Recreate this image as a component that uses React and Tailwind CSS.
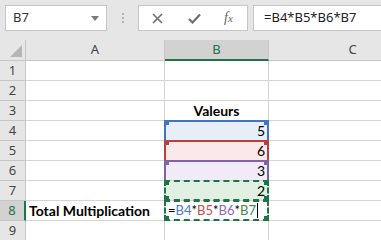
import React from 'react';

const rows = [1, 2, 3, 4, 5, 6, 7, 8, 9];

// colored reference ranges in column B
const ranges = {
  4: { color: 'border-[#4472c4]', fill: 'bg-[#e8eef9]', handle: 'bg-[#4472c4]', value: '5' },
  5: { color: 'border-[#b9403f]', fill: 'bg-[#fbe8e8]', handle: 'bg-[#b9403f]', value: '6' },
  6: { color: 'border-[#8064a2]', fill: 'bg-[#f0ebf7]', handle: 'bg-[#8064a2]', value: '3' },
  7: { color: 'border-[#217346] border-dashed', fill: 'bg-[#e2efe3]', handle: 'bg-[#217346]', value: '2' },
};

function Handle({ pos, cls }) {
  return <div className={`absolute w-[5px] h-[5px] ${cls} ${pos}`} />;
}

function RangeBox({ color, handle, bottom }) {
  return (
    <div
      className={`absolute -top-px -left-px -right-px ${bottom ? '-bottom-px border-b-2' : 'bottom-0'} border-t-2 border-l-2 border-r-2 ${color} z-10`}
    >
      <Handle pos="-top-[2px] -left-[2px]" cls={handle} />
      <Handle pos="-top-[2px] -right-[2px]" cls={handle} />
      {bottom && <Handle pos="-bottom-[2px] -left-[2px]" cls={handle} />}
      {bottom && <Handle pos="-bottom-[2px] -right-[2px]" cls={handle} />}
    </div>
  );
}

export default function App() {
  return (
    <div className="w-[381px] h-[240px] overflow-hidden bg-white font-['Lato',sans-serif]">
      {/* Formula bar */}
      <div className="h-[40px] bg-[#e6e6e6] flex items-start pt-[5px] pl-[5px] gap-[14px] overflow-hidden font-['Noto_Sans',sans-serif]">
        <div className="w-[102px] h-[26px] shrink-0 bg-white border border-[#c6c6c6] flex items-center justify-between pl-[7px] pr-[7px]">
          <span className="text-[13px] text-[#333]">B7</span>
          <svg width="8" height="5" viewBox="0 0 8 5"><path d="M0 0h8L4 5z" fill="#7a7a7a" /></svg>
        </div>
        <div className="w-[3px] h-[26px] shrink-0 flex flex-col items-center justify-center gap-[2px]">
          <div className="w-[2px] h-[2px] bg-[#b4b4b4]" />
          <div className="w-[2px] h-[2px] bg-[#b4b4b4]" />
          <div className="w-[2px] h-[2px] bg-[#b4b4b4]" />
        </div>
        <div className="flex gap-[5px] shrink-0">
          <div className="w-[110px] h-[26px] bg-white border border-[#c6c6c6] flex items-center pl-[13px]">
            <svg width="11" height="11" viewBox="0 0 11 11"><path d="M1 1l9 9M10 1l-9 9" stroke="#6f6f6f" strokeWidth="1.6" /></svg>
            <svg className="ml-[25px]" width="13" height="11" viewBox="0 0 13 11"><path d="M1 6l3.5 3.5L12 1.5" stroke="#6f6f6f" strokeWidth="2.2" fill="none" /></svg>
            <span className="ml-[23px] text-[14px] text-[#666] italic font-['Liberation_Serif',serif] leading-none">
              f<span className="text-[11px]">x</span>
            </span>
          </div>
          <div className="w-[150px] h-[26px] bg-white border border-[#c6c6c6] flex items-center pl-[10px]">
            <span className="text-[13px] text-[#222]">=B4*B5*B6*B7</span>
          </div>
        </div>
      </div>

      {/* Column headers */}
      <div className="flex h-[21px] bg-[#e6e6e6] font-['Noto_Sans',sans-serif] text-[13px] text-[#444]">
        <div className="w-[26px] shrink-0 border-r border-b border-[#c6c6c6] relative">
          <svg className="absolute right-[3px] bottom-[3px]" width="12" height="12" viewBox="0 0 12 12"><path d="M12 0V12H0z" fill="#b5b5b5" /></svg>
        </div>
        <div className="w-[139px] shrink-0 border-r border-b border-[#c6c6c6] flex items-center justify-center">A</div>
        <div className="w-[104px] shrink-0 bg-[#d2d2d2] border-r border-[#c6c6c6] border-b-2 border-b-[#217346] flex items-center justify-center text-[#217346]">B</div>
        <div className="w-[168px] shrink-0 border-r border-b border-[#c6c6c6] flex items-center justify-center">C</div>
      </div>

      {/* Grid rows */}
      {rows.map((r) => {
        const rg = ranges[r];
        return (
          <div key={r} className="flex h-[20px]">
            <div
              className={`w-[26px] shrink-0 border-b border-[#c6c6c6] flex items-center justify-center font-['Noto_Sans',sans-serif] text-[13px] ${
                r === 8 ? 'bg-[#d2d2d2] text-[#217346] border-r-2 border-r-[#217346]' : 'bg-[#e6e6e6] text-[#444] border-r border-r-[#c6c6c6]'
              }`}
            >
              {r}
            </div>
            <div className="w-[139px] shrink-0 border-r border-b border-[#d4d4d4] flex items-end pl-[3px] text-[14px] leading-[19px] text-black">
              {r === 8 && <span className="font-bold">Total Multiplication</span>}
            </div>
            <div
              className={`w-[104px] shrink-0 border-r border-b border-[#d4d4d4] relative flex items-end text-[14px] leading-[19px] text-black ${
                rg ? rg.fill : ''
              } ${r === 3 ? 'justify-center' : 'justify-end pr-[3px]'}`}
            >
              {r === 3 && <span className="font-bold">Valeurs</span>}
              {rg && <span>{rg.value}</span>}
              {rg && <RangeBox color={rg.color} handle={rg.handle} bottom={r === 7} />}
              {r === 8 && (
                <>
                  <div className="absolute -top-px -left-px -right-px -bottom-px border-2 border-dashed border-[#217346] z-10">
                    <Handle pos="-bottom-[2px] -left-[2px]" cls="bg-[#217346]" />
                    <Handle pos="-bottom-[2px] -right-[2px]" cls="bg-[#217346]" />
                  </div>
                  <span className="absolute left-[3px] bottom-0 flex items-end text-[13px] leading-[19px]">
                    <span className="text-black">=</span>
                    <span className="text-[#4a78cc]">B4</span>
                    <span className="text-black">*</span>
                    <span className="text-[#d24b4b]">B5</span>
                    <span className="text-black">*</span>
                    <span className="text-[#8a68c0]">B6</span>
                    <span className="text-black">*</span>
                    <span className="text-[#3e8a4c]">B7</span>
                    <span className="w-px h-[15px] bg-black ml-[1px] mb-[2px]" />
                  </span>
                </>
              )}
            </div>
            <div className="w-[168px] shrink-0 border-r border-b border-[#d4d4d4]" />
          </div>
        );
      })}
    </div>
  );
}
